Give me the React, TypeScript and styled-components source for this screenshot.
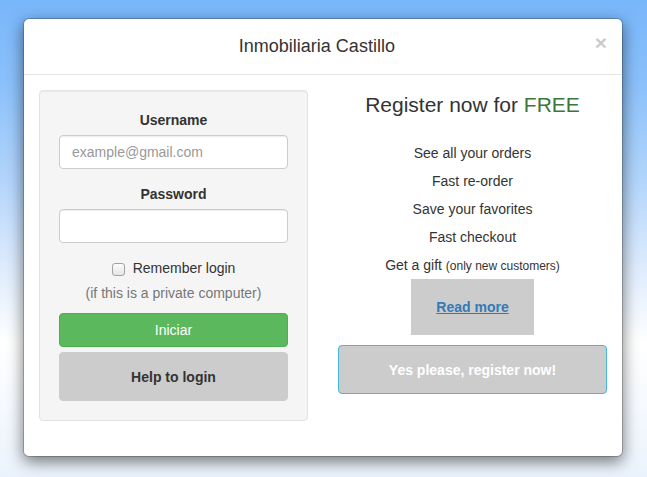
import React from "react";
import styled, { createGlobalStyle } from "styled-components";

const GlobalStyle = createGlobalStyle`
  html, body {
    margin: 0;
    padding: 0;
  }
  body {
    font-family: "Liberation Sans", Helvetica, Arial, sans-serif;
    font-size: 14px;
    line-height: 20px;
    color: #333;
  }
  * { box-sizing: border-box; }
`;

const Page = styled.div`
  width: 647px;
  height: 477px;
  overflow: hidden;
  padding: 18px 0 0 23px;
  background: linear-gradient(
    to bottom,
    #78b6fa 0%,
    #8cc1fa 18%,
    #b3d5fb 38%,
    #e2eefd 58%,
    #ffffff 72%,
    #f4f8fe 88%,
    #eaf3fd 100%
  );
`;

const Modal = styled.div`
  width: 600px;
  background: #fff;
  border: 1px solid rgba(0, 0, 0, 0.2);
  border-radius: 6px;
  box-shadow: 0 5px 15px rgba(0, 0, 0, 0.5);
  background-clip: padding-box;
`;

const Header = styled.div`
  display: flex;
  align-items: flex-start;
  padding: 15px;
  border-bottom: 1px solid #e5e5e5;
  height: 56px;
`;

const Title = styled.h4`
  flex: 1;
  margin: 0;
  text-align: center;
  font-size: 18px;
  font-weight: 400;
  line-height: 25px;
  color: #333;
`;

const Close = styled.button`
  border: 0;
  background: transparent;
  padding: 0;
  margin-top: -2px;
  font-family: "Liberation Sans", Helvetica, Arial, sans-serif;
  font-size: 21px;
  font-weight: 700;
  line-height: 1;
  color: #000;
  opacity: 0.2;
  cursor: pointer;
`;

const Body = styled.div`
  display: grid;
  grid-template-columns: 269px 269px;
  column-gap: 30px;
  padding: 15px;
`;

const Well = styled.div`
  background: #f5f5f5;
  border: 1px solid #e3e3e3;
  border-radius: 4px;
  box-shadow: inset 0 1px 1px rgba(0, 0, 0, 0.05);
  padding: 19px;
  margin-bottom: 20px;
  display: flex;
  flex-direction: column;
`;

const FormGroup = styled.div`
  display: flex;
  flex-direction: column;
  margin-bottom: 15px;
`;

const Label = styled.label`
  font-weight: 700;
  text-align: center;
  margin-bottom: 5px;
  line-height: 20px;
`;

const Input = styled.input`
  height: 34px;
  width: 100%;
  padding: 6px 12px;
  font-family: "Liberation Sans", Helvetica, Arial, sans-serif;
  font-size: 14px;
  color: #555;
  background: #fff;
  border: 1px solid #ccc;
  border-radius: 4px;
  box-shadow: inset 0 1px 1px rgba(0, 0, 0, 0.075);
  outline: none;
  &::placeholder {
    color: #999;
  }
`;

const CheckRow = styled.label`
  display: flex;
  justify-content: center;
  align-items: center;
  gap: 8px;
  line-height: 20px;
  margin-bottom: 5px;
`;

const Check = styled.input`
  appearance: none;
  margin: 0;
  width: 13px;
  height: 13px;
  border: 1px solid #a3a3a3;
  border-radius: 3px;
  background: linear-gradient(to bottom, #fcfcfc, #e4e4e4);
  position: relative;
  top: 1px;
`;

const Hint = styled.div`
  text-align: center;
  color: #777;
  line-height: 20px;
  margin-bottom: 10px;
`;

const Button = styled.button<{ $variant: "success" | "muted" }>`
  display: block;
  width: 100%;
  font-family: "Liberation Sans", Helvetica, Arial, sans-serif;
  font-size: 14px;
  line-height: 20px;
  border-radius: 4px;
  cursor: pointer;
  ${(p) =>
    p.$variant === "success"
      ? `
    height: 34px;
    background: #5cb85c;
    border: 1px solid #4cae4c;
    color: #fff;
    font-weight: 400;
  `
      : `
    height: 49px;
    margin-top: 5px;
    background: #ccc;
    border: 1px solid #ccc;
    color: #333;
    font-weight: 700;
  `}
`;

const Side = styled.div`
  display: flex;
  flex-direction: column;
  align-items: center;
`;

const Heading = styled.h3`
  margin: 4px 0 27px;
  font-size: 21px;
  font-weight: 400;
  line-height: 22px;
  color: #333;
  text-align: center;
`;

const Free = styled.span`
  color: #3c763d;
`;

const Perks = styled.ul`
  list-style: none;
  margin: 0;
  padding: 0;
  display: flex;
  flex-direction: column;
  align-items: center;
  gap: 8px;
`;

const Perk = styled.li`
  height: 20px;
  line-height: 20px;
`;

const Small = styled.small`
  font-size: 12px;
  line-height: 1;
`;

const ReadMore = styled.div`
  margin-top: 4px;
  width: 123px;
  height: 56px;
  background: #ccc;
  display: flex;
  align-items: center;
  justify-content: center;
`;

const ReadLink = styled.a`
  color: #337ab7;
  font-weight: 700;
  text-decoration: underline;
`;

const RegisterButton = styled.button`
  margin-top: 10px;
  width: 100%;
  height: 49px;
  background: #ccc;
  border: 1px solid #46b8da;
  border-radius: 4px;
  color: #fff;
  font-family: "Liberation Sans", Helvetica, Arial, sans-serif;
  font-size: 14px;
  font-weight: 700;
  cursor: pointer;
`;

export default function App() {
  const perks = ["See all your orders", "Fast re-order", "Save your favorites", "Fast checkout"];
  return (
    <>
      <GlobalStyle />
      <Page>
        <Modal>
          <Header>
            <Title>Inmobiliaria Castillo</Title>
            <Close aria-label="Close">×</Close>
          </Header>
          <Body>
            <Well>
              <FormGroup>
                <Label>Username</Label>
                <Input type="text" placeholder="example@gmail.com" />
              </FormGroup>
              <FormGroup>
                <Label>Password</Label>
                <Input type="password" />
              </FormGroup>
              <CheckRow>
                <Check type="checkbox" />
                <span>Remember login</span>
              </CheckRow>
              <Hint>(if this is a private computer)</Hint>
              <Button $variant="success">Iniciar</Button>
              <Button $variant="muted">Help to login</Button>
            </Well>
            <Side>
              <Heading>
                Register now for <Free>FREE</Free>
              </Heading>
              <Perks>
                {perks.map((p) => (
                  <Perk key={p}>{p}</Perk>
                ))}
                <Perk>
                  Get a gift <Small>(only new customers)</Small>
                </Perk>
              </Perks>
              <ReadMore>
                <ReadLink href="#">Read more</ReadLink>
              </ReadMore>
              <RegisterButton>Yes please, register now!</RegisterButton>
            </Side>
          </Body>
        </Modal>
      </Page>
    </>
  );
}
